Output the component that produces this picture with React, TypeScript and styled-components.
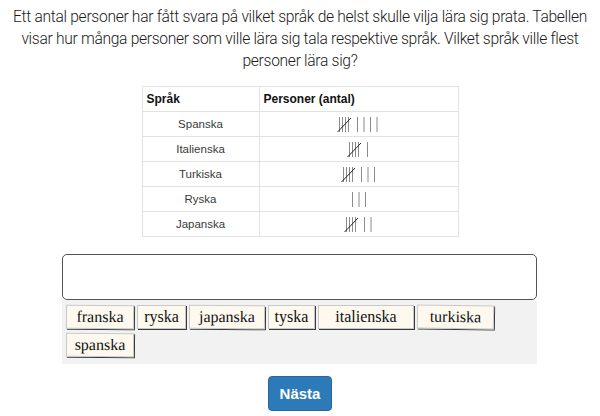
import React from "react";
import styled, { createGlobalStyle } from "styled-components";

const Global = createGlobalStyle`
  html, body { margin: 0; padding: 0; background: #ffffff; }
  body { font-family: Roboto, "Liberation Sans", Arial, sans-serif; }
`;

const Page = styled.div`
  width: 600px;
  display: flex;
  flex-direction: column;
  align-items: center;
`;

const Question = styled.p`
  margin: 6px 0 0;
  padding: 0 5px;
  font-family: Roboto, "Liberation Sans", Arial, sans-serif;
  font-weight: 300;
  font-size: 15.6px;
  letter-spacing: -0.3px;
  line-height: 22px;
  color: #1a1a1a;
  text-align: center;
`;

const Table = styled.table`
  margin-top: 14px;
  border-collapse: collapse;
  font-family: "Liberation Sans", Arial, sans-serif;
  font-size: 11.5px;
  color: #3a3a3a;
`;

const Th = styled.th<{ $w: number }>`
  width: ${(p) => p.$w}px;
  height: 24px;
  padding: 0 4px;
  border: 1px solid #e2e2e2;
  text-align: left;
  font-weight: 700;
  font-size: 12px;
  color: #111;
`;

const Td = styled.td`
  height: 24px;
  padding: 0 5px;
  border: 1px solid #e2e2e2;
  text-align: center;
  vertical-align: middle;
`;

const TallySvg = styled.svg`
  display: block;
  margin: 0 auto;
`;

const Area = styled.div`
  margin-top: 17px;
  width: 475px;
  margin-left: -1px;
  display: flex;
  flex-direction: column;
`;

const AnswerBox = styled.div`
  height: 44px;
  border: 1px solid #555;
  border-radius: 5px;
  background: #fff;
`;

const Bank = styled.div`
  background: #f2f2f2;
  padding: 5px 4px 7px;
  display: flex;
  flex-wrap: wrap;
  column-gap: 3px;
  row-gap: 4px;
`;

const Tile = styled.div<{ $w: number; $rot: number }>`
  box-sizing: border-box;
  width: ${(p) => p.$w}px;
  height: 24px;
  display: flex;
  align-items: center;
  justify-content: center;
  background: #fdf9ee;
  border: 1px solid #c8c8c8;
  box-shadow: 1px 1px 0 #3a3a3a;
  font-family: "Liberation Serif", "Times New Roman", serif;
  font-size: 16px;
  color: #111;
  transform: rotate(${(p) => p.$rot}deg);
`;

const NextButton = styled.button`
  margin-top: 12px;
  width: 64px;
  height: 35px;
  border: 1px solid #2a6699;
  border-radius: 4px;
  background: #2c7bb8;
  color: #fff;
  font-family: "Liberation Sans", Arial, sans-serif;
  font-weight: 700;
  font-size: 15px;
  padding: 0;
`;

function Tally({ n }: { n: number }) {
  const groups = Math.floor(n / 5);
  const singles = n % 5;
  const h = 18;
  const lines: React.ReactNode[] = [];
  let x = 2;
  for (let g = 0; g < groups; g++) {
    for (let i = 0; i < 4; i++) {
      lines.push(
        <line key={`g${g}${i}`} x1={x + i * 3 + 0.5} y1={2} x2={x + i * 3 + 0.5} y2={17} stroke="#8a8a8a" strokeWidth={1} />
      );
    }
    lines.push(
      <line key={`s${g}`} x1={x - 1.5} y1={17} x2={x + 12} y2={3} stroke="#222" strokeWidth={1} />
    );
    x += 18;
  }
  for (let i = 0; i < singles; i++) {
    lines.push(
      <line key={`o${i}`} x1={x + i * 6.5 + 0.5} y1={2} x2={x + i * 6.5 + 0.5} y2={17} stroke="#8a8a8a" strokeWidth={1} />
    );
  }
  const w = x + Math.max(0, singles - 1) * 6.5 + 3;
  return (
    <TallySvg width={w} height={h} viewBox={`0 0 ${w} ${h}`}>
      {lines}
    </TallySvg>
  );
}

const rows: [string, number][] = [
  ["Spanska", 9],
  ["Italienska", 6],
  ["Turkiska", 8],
  ["Ryska", 3],
  ["Japanska", 7],
];

const tiles: [string, number, number][] = [
  ["franska", 68, 0.4],
  ["ryska", 49, 0],
  ["japanska", 76, 0.3],
  ["tyska", 47, 0],
  ["italienska", 96, 0],
  ["turkiska", 77, 0.8],
  ["spanska", 68, 0.3],
];

export default function App() {
  return (
    <>
      <Global />
      <Page>
        <Question>
          Ett antal personer har fått svara på vilket språk de helst skulle vilja lära sig prata. Tabellen visar hur
          många personer som ville lära sig tala respektive språk. Vilket språk ville flest personer lära sig?
        </Question>
        <Table>
          <thead>
            <tr>
              <Th $w={108}>Språk</Th>
              <Th $w={190}>Personer (antal)</Th>
            </tr>
          </thead>
          <tbody>
            {rows.map(([name, n]) => (
              <tr key={name}>
                <Td>{name}</Td>
                <Td>
                  <Tally n={n} />
                </Td>
              </tr>
            ))}
          </tbody>
        </Table>
        <Area>
          <AnswerBox />
          <Bank>
            {tiles.map(([t, w, r]) => (
              <Tile key={t} $w={w} $rot={r}>
                {t}
              </Tile>
            ))}
          </Bank>
        </Area>
        <NextButton>Nästa</NextButton>
      </Page>
    </>
  );
}
